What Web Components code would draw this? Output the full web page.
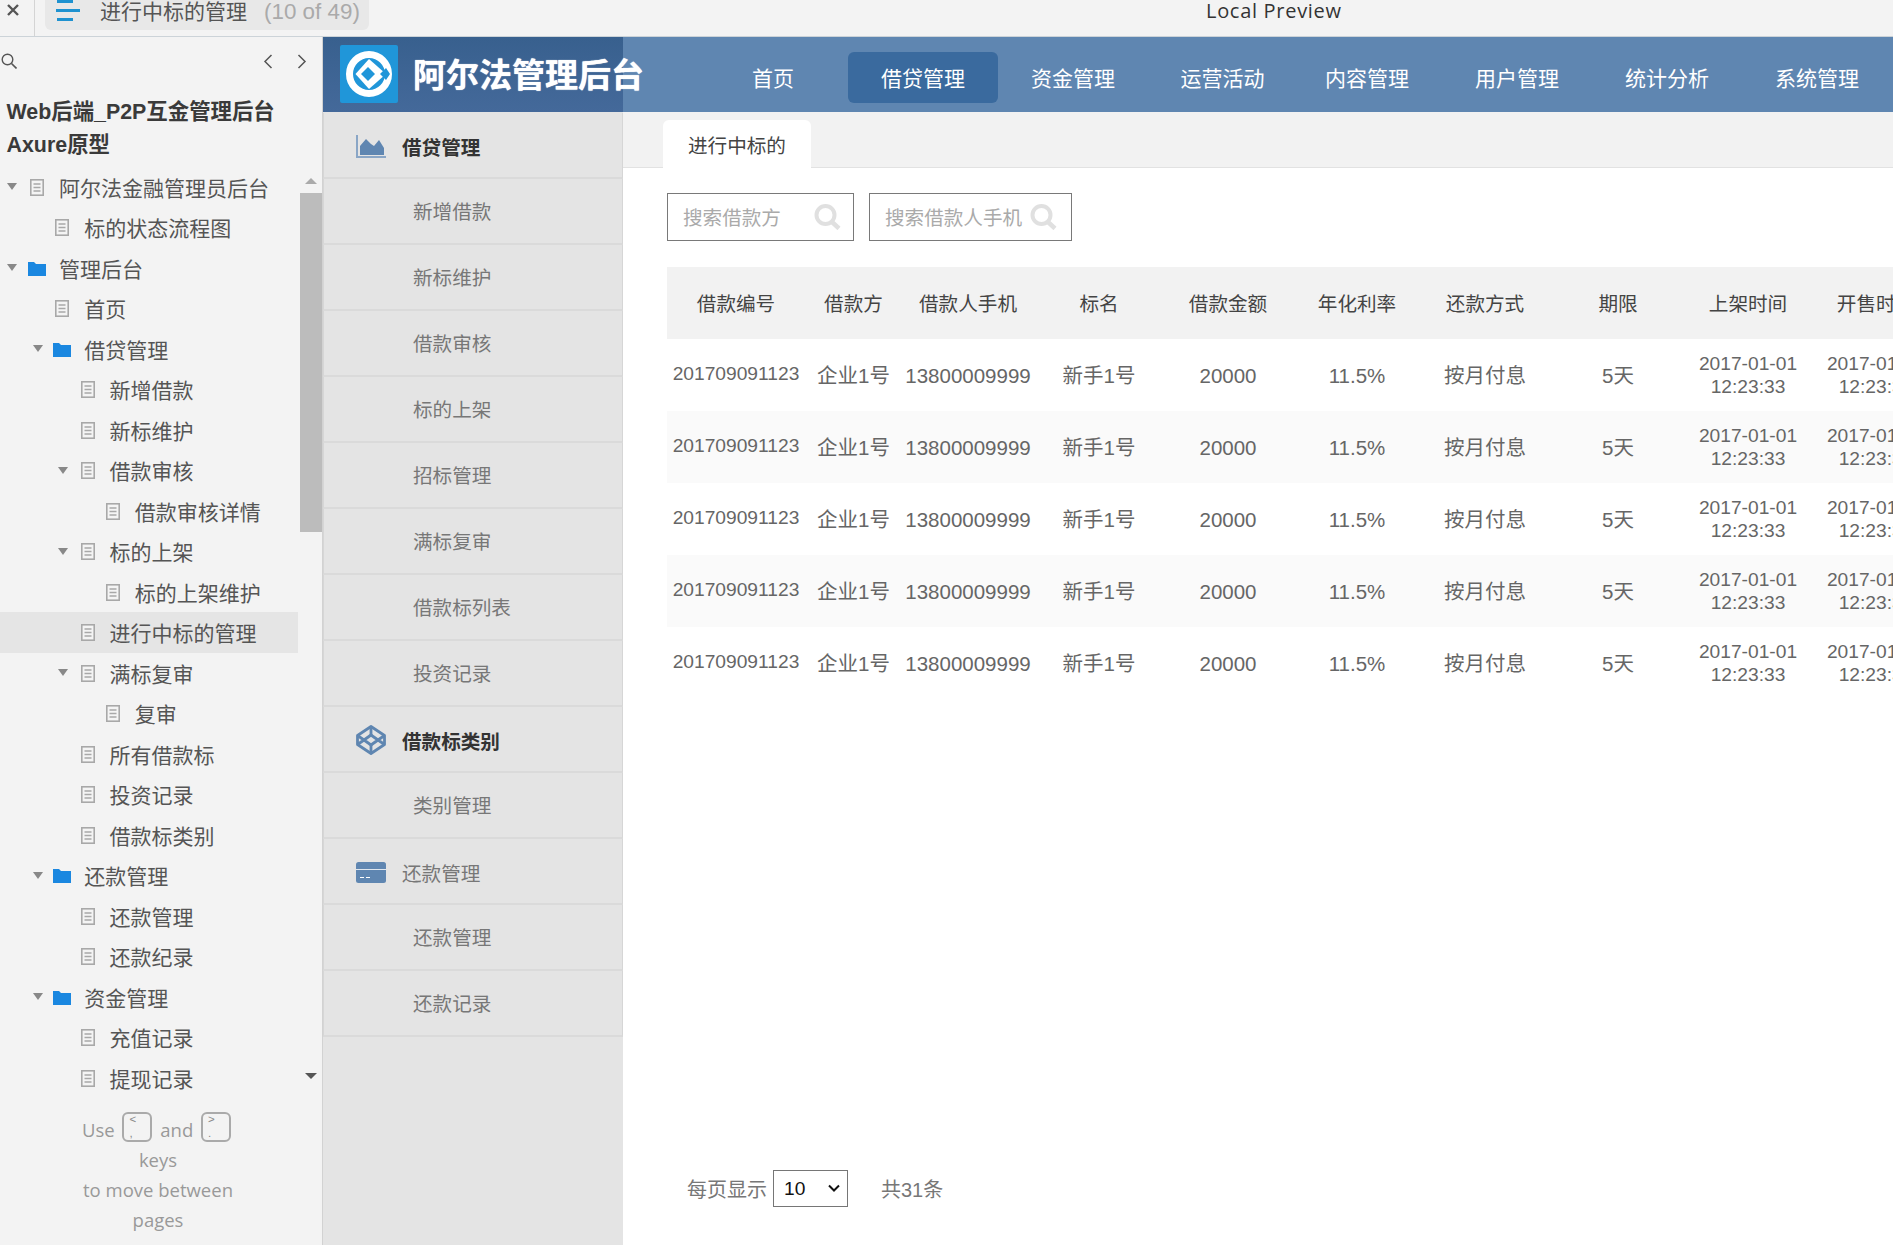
<!DOCTYPE html>
<html lang="zh">
<head>
<meta charset="utf-8">
<title>进行中标的管理</title>
<style>
  html, body { margin: 0; height: 100%; overflow: hidden; background: #fff; }
  body { font-family: "Liberation Sans", "Noto Sans CJK SC", sans-serif; width: 1893px; height: 1245px; }
  .page { display: flex; width: 1893px; height: 1208px; }
</style>
</head>
<body>
<preview-bar page="进行中标的管理" count="(10 of 49)">Local Preview</preview-bar>
<div class="page">
  <page-tree heading="Web后端_P2P互金管理后台" subheading="Axure原型">
    <tree-row level="0" caret>阿尔法金融管理员后台</tree-row>
    <tree-row level="1">标的状态流程图</tree-row>
    <tree-row level="0" caret folder>管理后台</tree-row>
    <tree-row level="1">首页</tree-row>
    <tree-row level="1" caret folder>借贷管理</tree-row>
    <tree-row level="2">新增借款</tree-row>
    <tree-row level="2">新标维护</tree-row>
    <tree-row level="2" caret>借款审核</tree-row>
    <tree-row level="3">借款审核详情</tree-row>
    <tree-row level="2" caret>标的上架</tree-row>
    <tree-row level="3">标的上架维护</tree-row>
    <tree-row level="2" selected>进行中标的管理</tree-row>
    <tree-row level="2" caret>满标复审</tree-row>
    <tree-row level="3">复审</tree-row>
    <tree-row level="2">所有借款标</tree-row>
    <tree-row level="2">投资记录</tree-row>
    <tree-row level="2">借款标类别</tree-row>
    <tree-row level="1" caret folder>还款管理</tree-row>
    <tree-row level="2">还款管理</tree-row>
    <tree-row level="2">还款纪录</tree-row>
    <tree-row level="1" caret folder>资金管理</tree-row>
    <tree-row level="2">充值记录</tree-row>
    <tree-row level="2">提现记录</tree-row>
  </page-tree>
  <admin-app></admin-app>
</div>

<script>
const DOC_ICON = `<svg width="14" height="17" viewBox="0 0 14 17"><rect x=".8" y=".8" width="12.400" height="15.400" fill="#f4f4f4" stroke="#a8a8a8" stroke-width="1.600"/><path d="M3.500 5h7M3.500 8.500h7M3.500 12h7" stroke="#a8a8a8" stroke-width="1.300"/></svg>`;
const FOLDER_ICON = `<svg width="18" height="15" viewBox="0 0 18 15"><path d="M0 1h6l2 2h10v12H0z" fill="#1a87e0"/></svg>`;

class PreviewBar extends HTMLElement {
  connectedCallback() {
    this.attachShadow({ mode: "open" }).innerHTML = `
      <style>
        :host { display: flex; height: 36px; background: #f3f3f3; border-bottom: 1px solid #ccd3d8; align-items: flex-start; overflow: hidden; }
        .close { width: 34px; height: 36px; border-right: 1px solid #d4d4d4; flex: none; }
        .close svg { display: block; margin: 4px 0 0 7px; }
        .pill { margin-left: 10px; width: 324px; height: 30px; background: #e8e8e8; border-radius: 0 0 6px 6px; display: flex; flex: none; }
        .pill svg { margin-left: 11px; flex: none; }
        .name { margin-left: 20px; font-size: 21px; line-height: 23px; color: #555; white-space: nowrap; }
        .count { margin-left: 17px; font-size: 22.400px; line-height: 23px; color: #aaa; white-space: nowrap; }
        .title { margin-left: 837px; font: 20px/22px "Open Sans", sans-serif; color: #333; white-space: nowrap; letter-spacing: .7px; }
      </style>
      <div class="close"><svg width="12" height="12" viewBox="0 0 12 12"><path d="M1 1l10 10M11 1L1 11" stroke="#555" stroke-width="2.400"/></svg></div>
      <div class="pill">
        <svg width="24" height="22" viewBox="0 0 24 22"><path d="M1 1.500h16M0 10.500h24M1 19.500h16" stroke="#1f92d0" stroke-width="3"/></svg>
        <span class="name">${this.getAttribute("page")}</span>
        <span class="count">${this.getAttribute("count")}</span>
      </div>
      <div class="title"><slot></slot></div>`;
  }
}
customElements.define("preview-bar", PreviewBar);

class PageTree extends HTMLElement {
  connectedCallback() {
    this.attachShadow({ mode: "open" }).innerHTML = `
      <style>
        :host { display: flex; flex-direction: column; flex: none; width: 322px; background: #f3f3f3; border-right: 1px solid #d2d2d2; color: #333; }
        .tools { height: 48px; display: flex; align-items: center; flex: none; box-sizing: border-box; }
        .tools svg { display: block; flex: none; }
        .search { margin-left: 1px; }
        .prev { margin-left: 246px; }
        .next { margin-left: 24px; }
        h1 { margin: 11px 0 4.500px; padding-left: 6.500px; font-size: 21.400px; line-height: 33px; font-weight: 700; color: #3a3a3a; }
        .tree { display: flex; height: 931.500px; flex: none; overflow: hidden; }
        .rows { width: 298px; flex: none; }
        .scroll { width: 22px; margin-left: 2px; height: 924px; position: relative; flex: none; }
        .up, .down { position: absolute; left: 5px; width: 0; height: 0; border-left: 6px solid transparent; border-right: 6px solid transparent; }
        .up { top: 11px; border-bottom: 6px solid #aaa; }
        .down { top: 906px; border-top: 6px solid #555; }
        .thumb { position: absolute; top: 26px; left: 0; width: 100%; height: 339px; background: #bcbcbc; }
        .help { padding: 16.500px 6px 0 0; text-align: center; font: 18.500px/30px "Open Sans", sans-serif; color: #999; }
        .first { height: 30px; }
        .key { display: inline-flex; flex-direction: column; align-items: flex-start; justify-content: center; box-sizing: border-box; width: 30px; height: 30px; margin: 0 3px; padding-left: 5px; border: 2px solid #aaa; border-radius: 6px; font: 11.500px/13.200px "Liberation Sans", sans-serif; color: #888; position: relative; top: -5px; vertical-align: middle; }
      </style>
      <div class="tools">
        <svg class="search" width="16" height="16" viewBox="0 0 16 16"><circle cx="6.500" cy="6.500" r="5.300" fill="none" stroke="#555" stroke-width="1.400"/><path d="M10.500 10.500l5 5" stroke="#555" stroke-width="1.600"/></svg>
        <svg class="prev" width="10" height="15" viewBox="0 0 10 15"><path d="M8.500 1L2 7.500 8.500 14" fill="none" stroke="#555" stroke-width="1.500"/></svg>
        <svg class="next" width="10" height="15" viewBox="0 0 10 15"><path d="M1.500 1L8 7.500 1.500 14" fill="none" stroke="#555" stroke-width="1.500"/></svg>
      </div>
      <h1>${this.getAttribute("heading")}<br>${this.getAttribute("subheading")}</h1>
      <div class="tree">
        <div class="rows"><slot></slot></div>
        <div class="scroll"><div class="up"></div><div class="thumb"></div><div class="down"></div></div>
      </div>
      <div class="help"><div class="first">Use <span class="key"><span>&lt;</span><span>,</span></span> and <span class="key"><span>&gt;</span><span>.</span></span></div>keys<br>to move between<br>pages</div>`;
  }
}
customElements.define("page-tree", PageTree);

class TreeRow extends HTMLElement {
  connectedCallback() {
    const level = Number(this.getAttribute("level"));
    this.attachShadow({ mode: "open" }).innerHTML = `
      <style>
        :host { display: flex; align-items: center; height: 40.500px; padding-left: ${level * 25.3}px; font-size: 21px; color: #555; white-space: nowrap; }
        :host([selected]) { background: #e5e5e5; }
        .caret, .icon { display: flex; align-items: center; justify-content: center; width: 24.700px; flex: none; }
        .caret i { width: 0; height: 0; border-left: 5px solid transparent; border-right: 5px solid transparent; border-top: 7px solid #888; }
        .icon { padding-top: 1px; }
        .icon svg { display: block; }
        .label { margin-left: 9.600px; }
      </style>
      <span class="caret">${this.hasAttribute("caret") ? "<i></i>" : ""}</span>
      <span class="icon">${this.hasAttribute("folder") ? FOLDER_ICON : DOC_ICON}</span>
      <span class="label"><slot></slot></span>`;
  }
}
customElements.define("tree-row", TreeRow);

class AdminApp extends HTMLElement {
  connectedCallback() {
    this.attachShadow({ mode: "open" }).innerHTML = `
      <style>
        :host { display: flex; flex-direction: column; flex: 1; min-width: 0; }
        .body { display: flex; flex: 1; min-height: 0; }
      </style>
      <app-header active="借贷管理"></app-header>
      <div class="body">
        <side-menu></side-menu>
        <list-page></list-page>
      </div>`;
  }
}
customElements.define("admin-app", AdminApp);

class AppHeader extends HTMLElement {
  connectedCallback() {
    const items = ["首页", "借贷管理", "资金管理", "运营活动", "内容管理", "用户管理", "统计分析", "系统管理"];
    const active = this.getAttribute("active");
    this.attachShadow({ mode: "open" }).innerHTML = `
      <style>
        :host { display: flex; height: 75px; background: #5f86b1; flex: none; }
        .brand { width: 300px; flex: none; display: flex; align-items: flex-start; padding: 8px 0 0 17px; box-sizing: border-box; background: linear-gradient(#38608e, #44699a); }
        .brand svg { display: block; flex: none; }
        .brand b { margin: 9px 0 0 15px; font-size: 33px; line-height: 44px; color: #fff; white-space: nowrap; text-shadow: 0 0 1px #fff; }
        nav { display: flex; margin-left: 75px; padding-top: 15px; }
        a { width: 150px; height: 51px; padding-bottom: 1px; box-sizing: border-box; flex: none; display: flex; align-items: center; justify-content: center; font-size: 21px; color: #fff; border-radius: 6px; }
        a.on { background: #3a6a9e; }
        a:nth-child(4) { width: 144px; padding-left: 5px; }
      </style>
      <div class="brand">
        <svg width="58" height="58" viewBox="0 0 58 58">
          <rect width="58" height="58" rx="2" fill="#2096d9"/>
          <circle cx="29" cy="29" r="19.500" fill="none" stroke="#fff" stroke-width="7"/>
          <path d="M29 14L46 29 29 44 15.500 29z" fill="#fff"/>
          <path d="M28 22L35 29 28 36 21 29z" fill="#2096d9"/>
          <path d="M46 23l4 6-4 6-6-6z" fill="#2096d9"/>
        </svg>
        <b>阿尔法管理后台</b>
      </div>
      <nav>${items.map(t => `<a class="${t === active ? "on" : ""}">${t}</a>`).join("")}</nav>`;
  }
}
customElements.define("app-header", AppHeader);

const CHART_ICON = `<svg width="30" height="23" viewBox="0 0 30 23"><path d="M1 0v22h29" fill="none" stroke="#8aa6c6" stroke-width="2"/><path d="M4 20V11l6-7 5 5 3 2 5-6 5 8v7z" fill="#5f86b1"/></svg>`;
const PEN_ICON = `<svg width="30" height="30" viewBox="0 0 30 30"><g fill="none" stroke="#5f86b1" stroke-width="2.800" stroke-linejoin="round"><path d="M15 1.500L28.500 10.500v9L15 28.500 1.500 19.500v-9z"/><path d="M15 10L22 15 15 20 8 15z"/><path d="M15 1.500V10M15 20v8.500M1.500 10.500L8 15 1.500 19.500M28.500 10.500L22 15l6.500 4.500"/></g></svg>`;
const CARD_ICON = `<svg width="30" height="21" viewBox="0 0 30 21"><rect width="30" height="21" rx="2.500" fill="#5f86b1"/><path d="M0 7.500h30" stroke="#dfe6ee" stroke-width="1"/><path d="M4 15.500h4M10 15.500h4" stroke="#fff" stroke-width="1.200"/></svg>`;

class SideMenu extends HTMLElement {
  connectedCallback() {
    this.attachShadow({ mode: "open" }).innerHTML = `
      <style>
        :host { display: block; width: 300px; flex: none; background: #e4e4e4; padding-top: 1px; }
      </style>
      <side-item head bold>${CHART_ICON}<span>借贷管理</span></side-item>
      <side-item>新增借款</side-item>
      <side-item>新标维护</side-item>
      <side-item>借款审核</side-item>
      <side-item>标的上架</side-item>
      <side-item>招标管理</side-item>
      <side-item>满标复审</side-item>
      <side-item>借款标列表</side-item>
      <side-item>投资记录</side-item>
      <side-item head bold>${PEN_ICON}<span>借款标类别</span></side-item>
      <side-item>类别管理</side-item>
      <side-item head>${CARD_ICON}<span>还款管理</span></side-item>
      <side-item>还款管理</side-item>
      <side-item>还款记录</side-item>`;
  }
}
customElements.define("side-menu", SideMenu);

class SideItem extends HTMLElement {
  connectedCallback() {
    this.attachShadow({ mode: "open" }).innerHTML = `
      <style>
        :host { display: flex; align-items: center; gap: 16px; height: 66px; box-sizing: border-box; padding: 0 0 1px 89px; border-left: 1px solid #d6d6d6; border-right: 1px solid #d6d6d6; border-bottom: 2px solid #dadada; font-size: 19.600px; color: #777; white-space: nowrap; }
        :host([head]) { padding: 2px 0 0 32px; }
        :host([bold]) { font-weight: 700; color: #333; }
        ::slotted(svg) { display: block; flex: none; }
      </style>
      <slot></slot>`;
  }
}
customElements.define("side-item", SideItem);

class ListPage extends HTMLElement {
  connectedCallback() {
    this.attachShadow({ mode: "open" }).innerHTML = `
      <style>
        :host { display: flex; flex-direction: column; flex: 1; min-width: 0; overflow: hidden; background: #fff; }
        .tabs { height: 56px; flex: none; box-sizing: border-box; background: #f2f2f2; border-bottom: 1px solid #e2e2e2; padding: 8px 0 0 40px; }
        .tab { display: inline-flex; align-items: center; height: 48px; padding: 0 25px; background: #fff; border-radius: 6px 6px 0 0; font-size: 19.600px; color: #444; box-sizing: border-box; }
        .content { flex: 1; min-height: 0; display: flex; flex-direction: column; padding: 25px 0 38px 44px; }
        .filters { display: flex; gap: 15.500px; flex: none; }
      </style>
      <div class="tabs"><div class="tab">进行中标的</div></div>
      <div class="content">
        <div class="filters">
          <search-box style="width:186.500px;padding-right:12px">搜索借款方</search-box>
          <search-box style="width:203px;padding-right:14px">搜索借款人手机</search-box>
        </div>
        <loan-table></loan-table>
        <page-size total="共31条"></page-size>
      </div>`;
  }
}
customElements.define("list-page", ListPage);

class SearchBox extends HTMLElement {
  connectedCallback() {
    this.attachShadow({ mode: "open" }).innerHTML = `
      <style>
        :host { display: flex; align-items: center; justify-content: space-between; box-sizing: border-box; height: 48px; padding: 0 0 1px 15px; border: 1px solid #797979; font-size: 19.600px; color: #aaa; white-space: nowrap; }
        svg { display: block; flex: none; }
      </style>
      <span><slot></slot></span>
      <svg width="27" height="26" viewBox="0 0 27 26"><circle cx="11.500" cy="11" r="9" fill="none" stroke="#e0e0e0" stroke-width="4"/><path d="M18 18l7 6.500" stroke="#e0e0e0" stroke-width="4.500"/></svg>`;
  }
}
customElements.define("search-box", SearchBox);

class LoanTable extends HTMLElement {
  connectedCallback() {
    const heads = ["借款编号", "借款方", "借款人手机", "标名", "借款金额", "年化利率", "还款方式", "期限", "上架时间", "开售时间"];
    const row = ["201709091123", "企业1号", "13800009999", "新手1号", "20000", "11.5%", "按月付息", "5天", "2017-01-01<br>12:23:33", "2017-01-01<br>12:23:33"];
    const rows = Array.from({ length: 5 }, () =>
      `<div class="row">${row.map(c => `<div>${c}</div>`).join("")}</div>`).join("");
    this.attachShadow({ mode: "open" }).innerHTML = `
      <style>
        :host { display: block; margin-top: 26px; flex: 1; min-height: 0; }
        .row, .head { display: grid; grid-template-columns: 138px 97px 132px 130px 128px 130px 126px 140px 120px 136px; height: 72px; }
        .head { background: #f2f2f2; color: #444; font-size: 19.600px; padding-bottom: 1px; box-sizing: border-box; }
        .row { color: #666; font-size: 20.500px; line-height: 23px; }
        .row:nth-child(even) { background: #fafafa; }
        .head > div, .row > div { display: flex; align-items: center; justify-content: center; text-align: center; white-space: nowrap; box-sizing: border-box; }
        .row > div { padding-top: 1px; }
        .row > div:first-child { padding: 0 0 4px; font-size: 19.200px; }
        .row > div:nth-child(n+9) { padding: 0; font-size: 19.200px; }
      </style>
      <div class="head">${heads.map(h => `<div>${h}</div>`).join("")}</div>
      <div>${rows}</div>`;
  }
}
customElements.define("loan-table", LoanTable);

class PageSize extends HTMLElement {
  connectedCallback() {
    this.attachShadow({ mode: "open" }).innerHTML = `
      <style>
        :host { display: flex; align-items: center; height: 37px; flex: none; padding-left: 20px; font-size: 20px; color: #777; white-space: nowrap; }
        .pick { position: relative; width: 75px; height: 37px; margin: 0 33px 0 6px; flex: none; }
        select { appearance: none; display: block; width: 100%; height: 100%; box-sizing: border-box; margin: 0; padding: 0 0 0 10px; font: 19.200px "Liberation Sans", sans-serif; color: #111; background: #fff; border: 1px solid #767676; border-radius: 0; }
        svg { position: absolute; right: 8px; top: 14px; pointer-events: none; }
      </style>
      <span>每页显示</span>
      <div class="pick">
        <select><option>10</option><option>20</option><option>50</option></select>
        <svg width="12" height="8" viewBox="0 0 12 8"><path d="M1 1.500L6 6.500 11 1.500" fill="none" stroke="#111" stroke-width="2"/></svg>
      </div>
      <span>${this.getAttribute("total")}</span>`;
  }
}
customElements.define("page-size", PageSize);
</script>
</body>
</html>
